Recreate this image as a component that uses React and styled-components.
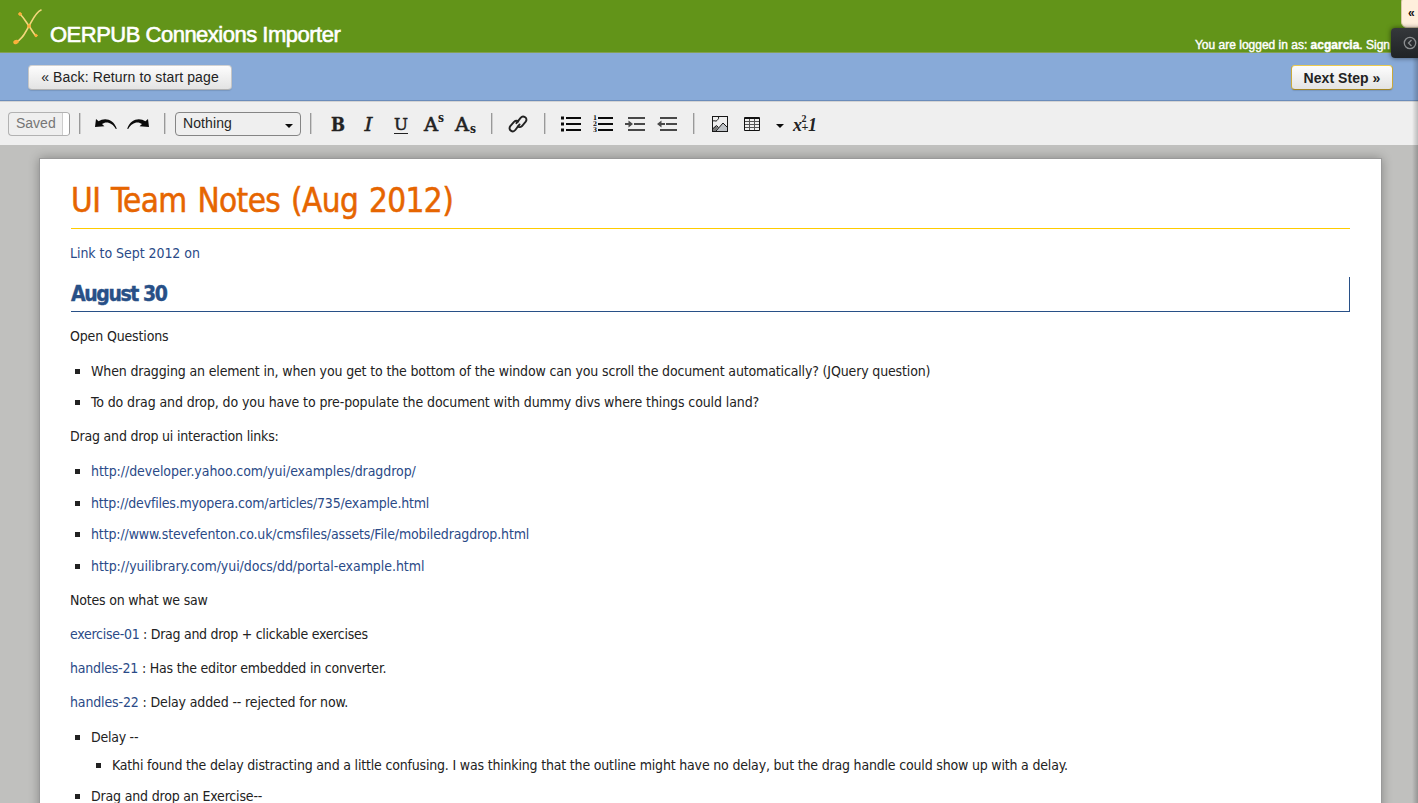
import React from 'react';
import styled, { createGlobalStyle } from 'styled-components';

const sans = '"Liberation Sans", Arial, sans-serif';
const body = '"DejaVu Sans Condensed", "DejaVu Sans", Tahoma, sans-serif';

const GlobalStyle = createGlobalStyle`
  * { box-sizing: border-box; }
  body { margin: 0; overflow: hidden; background: #c0c0be; }
`;

const Screen = styled.div`
  position: relative;
  display: flex;
  flex-direction: column;
  width: 1418px;
  height: 803px;
  overflow: hidden;
  background: #c0c0be;
  font-family: ${sans};
`;

const Header = styled.header`
  display: flex;
  justify-content: space-between;
  flex: none;
  height: 53px;
  padding: 0 28px 0 12px;
  background: #629419;
  border-bottom: 1px solid #84a052;
  color: #fff;
`;

const Brand = styled.div`
  display: flex;
  gap: 6px;
`;

const Title = styled.h1`
  margin: 22px 0 0;
  font-size: 22px;
  line-height: 26px;
  font-weight: 400;
  white-space: nowrap;
  letter-spacing: ${p => p.$track}px;
  -webkit-text-stroke: 0.6px #fff;
`;

const Login = styled.div`
  margin-top: 37px;
  font-size: 12px;
  line-height: 16px;
  white-space: nowrap;
  -webkit-text-stroke: 0.4px #fff;
`;

const StepBar = styled.nav`
  display: flex;
  justify-content: space-between;
  align-items: flex-start;
  flex: none;
  height: 48px;
  padding: 12px 25px 0 28px;
  background: #88aad8;
  border-bottom: 1px solid #6b8cba;
`;

const StepButton = styled.button`
  width: ${p => p.$width}px;
  height: 25px;
  padding: 0 0 ${p => (p.$primary ? 0 : 2)}px;
  border: 1px solid ${p => (p.$primary ? '#c9a93a' : '#c6c6c6')};
  border-top-color: ${p => (p.$primary ? '#eccb50' : '#d2d2d2')};
  border-bottom-color: ${p => (p.$primary ? '#a58725' : '#b2b2b2')};
  border-radius: 4px;
  background: linear-gradient(#fdfdfd, #e3e3e3);
  box-shadow: 0 1px 1px rgba(0, 0, 0, 0.12);
  color: #222;
  font: ${p => (p.$primary ? 700 : 400)} 14px/22px ${sans};
  letter-spacing: ${p => p.$track}px;
  white-space: nowrap;
`;

const Toolbar = styled.div`
  display: flex;
  align-items: center;
  flex: none;
  height: 44px;
  padding-left: 8px;
  background: #efefef;
  border-top: 1px solid #d4d4d4;
`;

const SavedBox = styled.div`
  display: flex;
  width: 62px;
  height: 24px;
  border: 1px solid #b2b2b2;
  border-right-color: #999;
  border-radius: 4px;
  background: #efefef;
  overflow: hidden;
  color: #767676;
  font-size: 14px;
  line-height: 21px;
  padding-left: 7px;
  justify-content: space-between;
`;

const SavedGap = styled.span`
  width: 7px;
  background: #fff;
  border-left: 1px solid #ccc;
`;

const Divider = styled.span`
  flex: none;
  width: 2px;
  height: 21px;
  margin: 0 ${p => p.$after}px 0 ${p => p.$before}px;
  border-left: 1px solid #999;
  border-right: 1px solid #cfcfcf;
`;

const StyleSelect = styled.div`
  display: flex;
  justify-content: space-between;
  align-items: center;
  width: 126px;
  height: 24px;
  padding: 0 7px 2px;
  border: 1px solid #858585;
  border-radius: 4px;
  color: #262626;
  font-size: 14px;
  line-height: 20px;
  letter-spacing: 0.1px;
`;

const Caret = styled.span`
  width: 0;
  height: 0;
  margin-top: ${p => p.$drop}px;
  border: 4px solid transparent;
  border-top-color: #0c0c0c;
  border-bottom: 0;
`;

const Group = styled.div`
  display: flex;
`;

const Tool = styled.span`
  display: flex;
  align-items: center;
  justify-content: center;
  width: ${p => p.$width || 32}px;
  height: 32px;
`;

const Canvas = styled.main`
  flex: 1;
  min-height: 0;
  padding: 13px 36px 0 39px;
`;

const Paper = styled.article`
  height: 720px;
  padding: 22px 31px 0 30px;
  border: 1px solid #999;
  background: #fff;
  box-shadow: 0 0 10px rgba(0, 0, 0, 0.3);
  color: #222;
  font: 14px/20px ${body};
`;

const DocTitle = styled.h2`
  height: 48px;
  margin: 0 0 0 1px;
  border-bottom: 1px solid #fc0;
  color: #e66500;
  font-size: 33px;
  line-height: 39px;
  font-weight: 400;
  letter-spacing: -0.6px;
  word-spacing: 2px;
  white-space: nowrap;
  -webkit-text-stroke: 0.5px #e66500;
`;

const DateHeading = styled.h3`
  height: 35px;
  margin: 14px 0 0 1px;
  border-right: 1px solid #285087;
  border-bottom: 1px solid #285087;
  color: #285087;
  font-size: 21px;
  line-height: 34px;
  letter-spacing: -1.4px;
  -webkit-text-stroke: 0.4px #285087;
`;

const Line = styled.p`
  display: flex;
  align-items: center;
  height: 20px;
  margin: ${p => p.$top}px 0 0;
  padding-left: ${p => (p.$level || 0) * 21}px;
  letter-spacing: ${p => p.$track || 0}px;
  white-space: pre;
`;

const Bullet = styled.span`
  flex: none;
  width: 5px;
  height: 5px;
  margin: 1px 11px 0 -16px;
  background: #222;
`;

const Link = styled.a`
  color: #2a4a87;
`;

const CollapseTab = styled.div`
  position: absolute;
  top: -4px;
  right: -4px;
  width: 21px;
  height: 32px;
  padding: 8px 0 0 6px;
  border: 1px solid #d8c8a8;
  border-radius: 6px;
  background: #ffefdc;
  color: #111;
  font: 700 12px/16px ${sans};
`;

const DarkTab = styled.div`
  position: absolute;
  top: 28px;
  right: -4px;
  width: 31px;
  height: 30px;
  padding: 8px 0 0 12px;
  border-radius: 4px;
  background: linear-gradient(#35383b, #202326);
  box-shadow: 0 0 5px rgba(0, 0, 0, 0.55);
`;

const EdgeShade = styled.div`
  position: absolute;
  top: 58px;
  right: 0;
  bottom: 0;
  width: 6px;
  background: linear-gradient(to right, rgba(0, 0, 0, 0), rgba(0, 0, 0, 0.22));
`;

const Logo = () => (
  <svg width="32" height="52" viewBox="12 0 32 52" fill="none" stroke="#f4d77c" strokeLinecap="round">
    <path d="M20 14C24 18 26 22 29 26S33 33 36 36" strokeWidth="1.6" />
    <path d="M41 10C36 12 33 19 29 26S22 40 16 42" strokeWidth="1.6" />
    <circle cx="20" cy="14" r="1.4" fill="#fbb03b" stroke="#fbb03b" strokeWidth=".8" />
    <circle cx="29" cy="26" r="1.5" fill="#fbb03b" stroke="#fbb03b" strokeWidth=".8" />
    <circle cx="36" cy="35.5" r="1.3" fill="#fbb03b" stroke="#fbb03b" strokeWidth=".6" />
    <ellipse cx="16" cy="42" rx="2.8" ry="2" fill="#fbb03b" stroke="none" transform="rotate(-20 16 42)" />
  </svg>
);

const Undo = ({ flip }) => (
  <svg width="24" height="14" viewBox="0 0 24 14" fill="#0a0a0a">
    <g transform={flip ? 'matrix(-1 0 0 1 24 0)' : undefined}>
      <path d="M2 2L4.6 4.3C10 .4 19.5 1.4 22.8 11.8L21.8 12C18.5 5.4 12 3.8 8 7L10.4 9.2L1 10Z" />
    </g>
  </svg>
);

const Glyph = ({ x = 0, y, size, width, children, weight = 400, italic, bolder = 0, family = 'DejaVu Serif' }) => (
  <text
    x={x}
    y={y}
    fontFamily={`"${family}", serif`}
    fontSize={size}
    fontWeight={weight}
    fontStyle={italic ? 'italic' : 'normal'}
    textLength={width}
    lengthAdjust="spacingAndGlyphs"
    fill="#222"
    stroke="#222"
    strokeWidth={bolder}
  >
    {children}
  </text>
);

const LetterIcon = ({ children }) => (
  <svg width="32" height="32" viewBox="0 0 32 32">{children}</svg>
);

const Chain = () => (
  <svg width="20" height="20" viewBox="0 0 20 20" fill="none" stroke="#222" strokeWidth="1.9" strokeLinecap="round">
    <path d="M8.4 9.2L12.6 3.8C15.2.7 20.4 4.2 17.7 7.7L14 12C12.3 13.6 10.5 13.2 9.8 12.4" />
    <path d="M11.6 10.4L7.3 16C4.8 19.2-.4 15.7 2.3 12.2L6 7.9C7.7 6.3 9.5 6.7 10.2 7.5" />
  </svg>
);

const ListIcon = ({ numbered }) => (
  <svg width="20" height="18" viewBox="0 0 20 18" fill="#0a0a0a">
    {[2, 8, 14].map((y, i) => (
      <React.Fragment key={y}>
        {numbered ? (
          <text x="0" y={y + 3.4} fontFamily='"DejaVu Serif", serif' fontSize="6.5" textLength="4" lengthAdjust="spacingAndGlyphs" fontWeight="700">{i + 1}</text>
        ) : (
          <rect x="0" y={y - 0.5} width="3" height="3" />
        )}
        <rect x="5" y={y} width="15" height="2" />
      </React.Fragment>
    ))}
  </svg>
);

const IndentIcon = ({ out }) => (
  <svg width="20" height="18" viewBox="0 0 20 18" fill="#484848">
    <rect x="3" y="2" width="17" height="2" />
    <rect x="9" y="8" width="11" height="2" />
    <rect x="3" y="14" width="17" height="2" />
    {out ? (
      <path d="M0 9L4.5 5.5V8H8V10H4.5V12.5Z" />
    ) : (
      <path d="M8 9L3.5 5.5V8H0V10H3.5V12.5Z" />
    )}
  </svg>
);

const PictureIcon = () => (
  <svg width="16" height="16" viewBox="0 0 16 16" fill="none" stroke="#181818">
    <path d="M1 12L4.5 9L7 11.5L11 7L15 11V15H1Z" fill="#bfc3c7" stroke="none" />
    <path d="M1 12.5L4 10L6 11.5L3.5 15H1Z" fill="#777" stroke="none" />
    <path d="M.5 13L4.5 9.5L6.5 11.5M4 15L11 7L15.5 11.5M1 5C2 4 4 6 5 4.5S7 3 6.5 1" />
    <rect x=".5" y=".5" width="15" height="15" />
  </svg>
);

const TableIcon = () => (
  <svg width="16" height="14" viewBox="0 0 16 14" fill="none" stroke="#111">
    <path d="M.5 4.5H15.5M.5 7.5H15.5M.5 10.5H15.5M5.5 2V13M10.5 2V13" stroke="#555" />
    <path d="M.5 .5H15.5V13.5H.5ZM0 1.5H16" />
  </svg>
);

export default function App() {
  return (
    <>
      <GlobalStyle />
      <Screen>
        <Header>
          <Brand>
            <Logo />
            <Title $track={-0.5}>OERPUB Connexions Importer</Title>
          </Brand>
          <Login>You are logged in as: <b>acgarcia</b>. Sign</Login>
        </Header>
        <StepBar>
          <StepButton $width={204} $track={0.12}>« Back: Return to start page</StepButton>
          <StepButton $width={102} $track={0.05} $primary>Next Step »</StepButton>
        </StepBar>
        <Toolbar>
          <SavedBox>Saved<SavedGap /></SavedBox>
          <Divider $before={9} $after={9} />
          <Group>
            <Tool><Undo /></Tool>
            <Tool><Undo flip /></Tool>
          </Group>
          <Divider $before={10} $after={9} />
          <StyleSelect>Nothing<Caret $drop={6} /></StyleSelect>
          <Divider $before={9} $after={10} />
          <Group>
            <Tool><LetterIcon><Glyph x={9} y={23} size={18} width={14} weight={700} bolder={0.4}>B</Glyph></LetterIcon></Tool>
            <Tool><LetterIcon><Glyph x={10.5} y={23} size={18} width={8} italic bolder={0.4}>I</Glyph></LetterIcon></Tool>
            <Tool>
              <LetterIcon>
                <Glyph x={8} y={22} size={17} width={14} bolder={0.5}>U</Glyph>
                <rect x="8" y="25" width="14" height="1" fill="#222" />
              </LetterIcon>
            </Tool>
            <Tool>
              <LetterIcon>
                <Glyph x={6} y={23} size={18} width={14} bolder={0.6}>A</Glyph>
                <Glyph x={20} y={13.5} size={12} width={6} weight={700}>s</Glyph>
              </LetterIcon>
            </Tool>
            <Tool>
              <LetterIcon>
                <Glyph x={5} y={23} size={18} width={14} bolder={0.6}>A</Glyph>
                <Glyph x={20} y={25} size={12} width={6} weight={700}>s</Glyph>
              </LetterIcon>
            </Tool>
          </Group>
          <Divider $before={9} $after={9} />
          <Tool><Chain /></Tool>
          <Divider $before={10} $after={9} />
          <Group>
            <Tool><ListIcon /></Tool>
            <Tool><ListIcon numbered /></Tool>
            <Tool><IndentIcon /></Tool>
            <Tool><IndentIcon out /></Tool>
          </Group>
          <Divider $before={10} $after={9} />
          <Group>
            <Tool><PictureIcon /></Tool>
            <Tool><TableIcon /></Tool>
            <Tool $width={24}><Caret $drop={5} /></Tool>
            <Tool $width={26}>
              <svg width="26" height="32" viewBox="0 0 26 32">
                <Glyph x={1} y={23} size={19} width={9} weight={700} italic family="Liberation Serif">x</Glyph>
                <Glyph x={9.5} y={13.5} size={11} width={5} weight={700} family="Liberation Serif">2</Glyph>
                <Glyph x={9.5} y={23} size={12} width={7} weight={700} family="Liberation Serif">+</Glyph>
                <Glyph x={16} y={23} size={18} width={9} weight={700} italic family="Liberation Serif">1</Glyph>
              </svg>
            </Tool>
          </Group>
        </Toolbar>
        <Canvas>
          <Paper>
            <DocTitle>UI Team Notes (Aug 2012)</DocTitle>
            <Line $top={14} $track={-0.05}><Link>Link to Sept 2012 on</Link></Line>
            <DateHeading>August 30</DateHeading>
            <Line $top={14} $track={-0.15}>Open Questions</Line>
            <Line $top={15} $level={1} $track={-0.15}><Bullet />When dragging an element in, when you get to the bottom of the window can you scroll the document automatically? (JQuery question)</Line>
            <Line $top={11} $level={1} $track={-0.107}><Bullet />To do drag and drop, do you have to pre-populate the document with dummy divs where things could land?</Line>
            <Line $top={14} $track={-0.2}>Drag and drop ui interaction links:</Line>
            <Line $top={15} $level={1} $track={-0.06}><Bullet /><Link>http://developer.yahoo.com/yui/examples/dragdrop/</Link></Line>
            <Line $top={12} $level={1} $track={-0.19}><Bullet /><Link>http://devfiles.myopera.com/articles/735/example.html</Link></Line>
            <Line $top={11} $level={1} $track={-0.135}><Bullet /><Link>http://www.stevefenton.co.uk/cmsfiles/assets/File/mobiledragdrop.html</Link></Line>
            <Line $top={12} $level={1} $track={-0.06}><Bullet /><Link>http://yuilibrary.com/yui/docs/dd/portal-example.html</Link></Line>
            <Line $top={14} $track={-0.2}>Notes on what we saw</Line>
            <Line $top={14} $track={-0.28}><Link>exercise-01</Link> : Drag and drop + clickable exercises</Line>
            <Line $top={14} $track={-0.2}><Link>handles-21</Link> : Has the editor embedded in converter.</Line>
            <Line $top={14} $track={-0.14}><Link>handles-22</Link> : Delay added -- rejected for now.</Line>
            <Line $top={15} $level={1} $track={-0.25}><Bullet />Delay --</Line>
            <Line $top={8} $level={2} $track={-0.184}><Bullet />Kathi found the delay distracting and a little confusing. I was thinking that the outline might have no delay, but the drag handle could show up with a delay.</Line>
            <Line $top={11} $level={1} $track={-0.18}><Bullet />Drag and drop an Exercise--</Line>
          </Paper>
        </Canvas>
        <EdgeShade />
        <CollapseTab>«</CollapseTab>
        <DarkTab>
          <svg width="14" height="14" viewBox="0 0 14 14" fill="none" stroke="#8b8e90" strokeWidth="1.3">
            <circle cx="7" cy="7" r="5.7" />
            <path d="M8.5 4L5.5 7L8.5 10" />
          </svg>
        </DarkTab>
      </Screen>
    </>
  );
}
